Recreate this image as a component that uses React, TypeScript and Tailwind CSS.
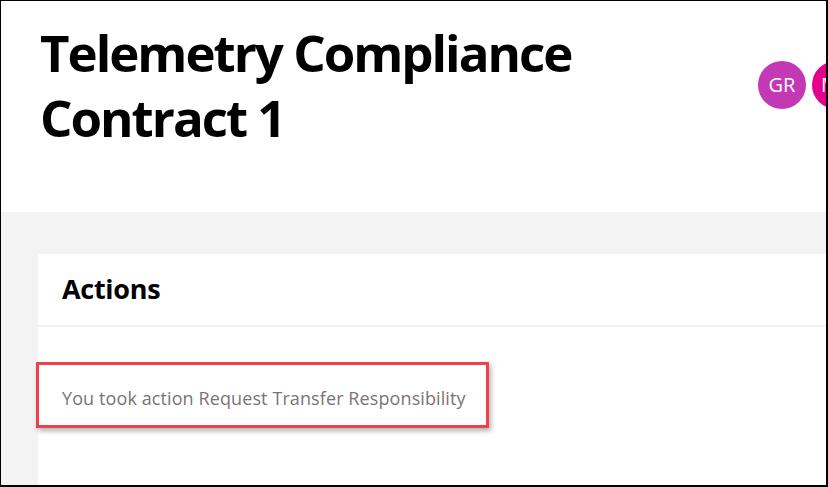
export default function App() {
  return (
    <div
      className="w-[828px] h-[487px] overflow-hidden border-l border-t border-r-2 border-b-2 border-black flex flex-col bg-white"
      style={{ fontFamily: '"Open Sans", "Noto Sans", sans-serif' }}
    >
      {/* Header */}
      <div className="h-[211px] shrink-0 bg-white flex justify-between">
        <h1 className="pl-[39px] pt-[19px] text-[51px] leading-[65px] font-bold text-black tracking-[-2px]">
          Telemetry Compliance
          <br />
          Contract 1
        </h1>
        <div className="flex gap-[6px] pt-[60px] -mr-[34px]">
          <div className="w-12 h-12 rounded-full bg-[#c239b3] text-white flex items-center justify-center text-[20px]">
            GR
          </div>
          <div className="w-12 h-12 rounded-full bg-[#e3008c] text-white flex items-center justify-center text-[20px]">
            MK
          </div>
        </div>
      </div>

      {/* Content */}
      <div className="flex-1 bg-[#f3f3f3] pl-[37px] pt-[42px]">
        <div className="bg-white h-full">
          <div className="h-[73px] border-b-2 border-[#f3f3f3] flex items-center pl-[24px]">
            <h2 className="text-[27px] font-bold text-black tracking-[-0.3px]">Actions</h2>
          </div>
          <div className="pt-[35px]">
            <div className="-ml-[2px] w-[453px] h-[66px] border-[3px] border-[#ef4149] flex items-center pl-[23px] pt-[6px] shadow-[2px_3px_5px_rgba(0,0,0,0.3)]">
              <span className="text-[18px] text-[#7a7574] tracking-[0.1px]">
                You took action Request Transfer Responsibility
              </span>
            </div>
          </div>
        </div>
      </div>
    </div>
  );
}
